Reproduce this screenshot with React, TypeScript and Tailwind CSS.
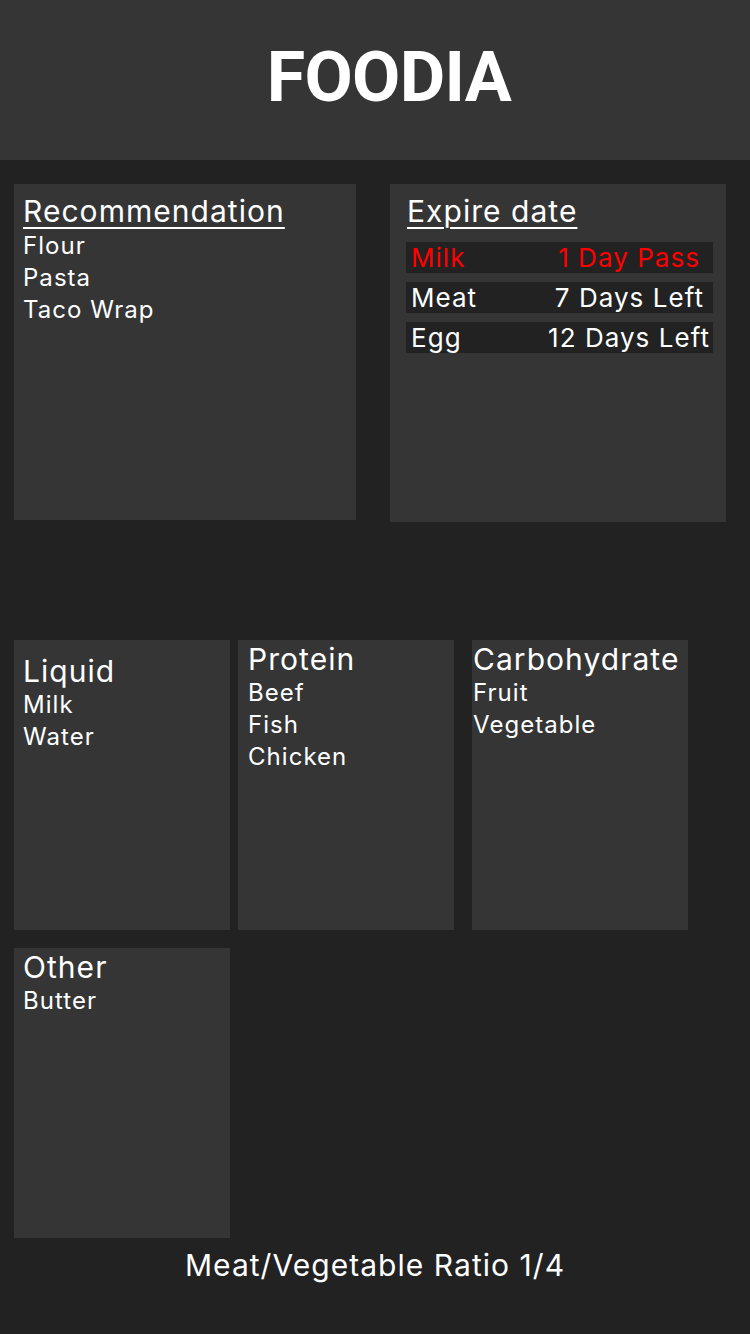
import React from "react";

const expireItems = [
  { name: "Milk", left: "1 Day Pass", alert: true, pad: "pr-[13px]" },
  { name: "Meat", left: "7 Days Left", alert: false, pad: "pr-[9px]" },
  { name: "Egg", left: "12 Days Left", alert: false, pad: "pr-[3px]" },
];

const Category = ({ title, items, className }: { title: string; items: string[]; className: string }) => (
  <div className={`w-[216px] h-[290px] bg-[#353535] ${className}`}>
    <div className="text-[30px] leading-[36px]">{title}</div>
    {items.map((item) => (
      <div key={item} className="text-[24px] leading-[32px]">
        {item}
      </div>
    ))}
  </div>
);

const App = () => {
  return (
    <div className="w-[750px] h-[1334px] bg-[#222222] text-white overflow-hidden font-['Inter',sans-serif] tracking-[0.065em]">
      {/* Header */}
      <header className="h-[160px] bg-[#353535] flex items-center justify-center pb-[6px] pl-[28px]">
        <h1 className="font-['Roboto',sans-serif] font-bold text-[70px] leading-none tracking-[-0.01em]">FOODIA</h1>
      </header>

      {/* Top cards */}
      <div className="flex items-start mt-[24px] pl-[14px] gap-[34px]">
        <section className="w-[342px] h-[336px] bg-[#353535] pl-[9px] pt-[9px]">
          <div className="text-[30px] leading-[36px] underline decoration-2 underline-offset-[5px]">Recommendation</div>
          <div className="mt-[1px]">
            {["Flour", "Pasta", "Taco Wrap"].map((item) => (
              <div key={item} className="text-[24px] leading-[32px]">
                {item}
              </div>
            ))}
          </div>
        </section>

        <section className="w-[336px] h-[338px] bg-[#353535] pl-[16px] pr-[13px] pt-[9px]">
          <div className="pl-[1px] text-[30px] leading-[36px] underline decoration-2 underline-offset-[5px]">Expire date</div>
          <div className="mt-[13px] flex flex-col gap-[9px]">
            {expireItems.map((row) => (
              <div
                key={row.name}
                className={`h-[31px] bg-[#222222] flex items-center justify-between pl-[5px] ${row.pad} text-[26px] ${
                  row.alert ? "text-[#ff0000]" : "text-white"
                }`}
              >
                <span>{row.name}</span>
                <span>{row.left}</span>
              </div>
            ))}
          </div>
        </section>
      </div>

      {/* Categories */}
      <div className="mt-[118px] pl-[14px] flex items-start">
        <Category title="Liquid" items={["Milk", "Water"]} className="pl-[9px] pt-[13px]" />
        <Category title="Protein" items={["Beef", "Fish", "Chicken"]} className="ml-[8px] pl-[10px] pt-[1px]" />
        <Category title="Carbohydrate" items={["Fruit", "Vegetable"]} className="ml-[18px] pl-[1px] pt-[1px]" />
      </div>
      <div className="mt-[18px] pl-[14px]">
        <Category title="Other" items={["Butter"]} className="pl-[9px] pt-[1px]" />
      </div>

      {/* Footer ratio */}
      <div className="mt-[9px] text-center text-[30px] leading-[36px]">Meat/Vegetable Ratio 1/4</div>
    </div>
  );
};

export default App;
